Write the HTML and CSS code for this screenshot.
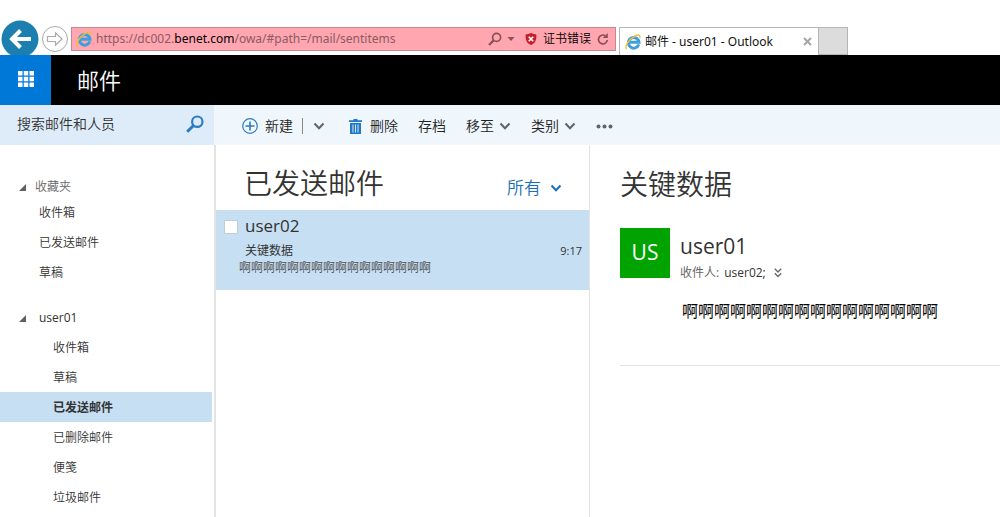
FILE: index.html
```html
<!DOCTYPE html>
<html lang="zh-CN">
<head>
<meta charset="utf-8">
<meta name="viewport" content="width=device-width, initial-scale=1">
<title>邮件 - user01 - Outlook</title>
<link rel="stylesheet" href="styles.css">
</head>
<body>
<svg class="defs" aria-hidden="true">
  <symbol id="ie" viewBox="0 0 16 16">
    <path d="M13.800 10.400A5.300 5.300 0 1 1 14 8.200H5" fill="none" stroke="#3f9fdc" stroke-width="3"/>
    <path d="M1.800 15C-.8 13 3.400 5.800 9.400 2.300 12.600.5 15.800.4 14.800 4" fill="none" stroke="#efc030" stroke-width="1.400"/>
  </symbol>
  <symbol id="chevron" viewBox="0 0 12 8">
    <path d="M1.500 1.500 6 6.200l4.500-4.700" fill="none" stroke="currentColor" stroke-width="2"/>
  </symbol>
</svg>

<div class="browser">
  <button class="back" type="button" aria-label="后退">
    <svg viewBox="0 0 38 38"><circle cx="19" cy="19" r="18.500" fill="#1d7fb0"/><path d="M30 19H11M19.500 10.500 11 19l8.500 8.500" fill="none" stroke="#fff" stroke-width="4"/></svg>
  </button>
  <button class="forward" type="button" aria-label="前进">
    <svg viewBox="0 0 28 28"><circle cx="14" cy="14" r="12.500" fill="#fff" stroke="#a9a9a9"/><path d="M6.500 11.500h8V7.800l6.500 6.200-6.500 6.200v-3.700h-8z" fill="#fff" stroke="#a9a9a9" stroke-width="1.200"/></svg>
  </button>
  <div class="address">
    <svg class="ie"><use href="#ie"/></svg>
    <span class="url">https://dc002.<b>benet.com</b>/owa/#path=/mail/sentitems</span>
    <button class="tool" type="button" aria-label="搜索">
      <svg width="14" height="14" viewBox="0 0 14 14"><circle cx="8.600" cy="5.400" r="4" fill="none" stroke="#8a5058" stroke-width="1.700"/><path d="M5.600 8.400 1 13" stroke="#8a5058" stroke-width="2.200"/></svg>
      <svg width="8" height="4" viewBox="0 0 8 4"><path d="M.5 0h7L4 4z" fill="#8a5058"/></svg>
    </button>
    <button class="cert" type="button">
      <svg width="12" height="12" viewBox="0 0 12 12"><path d="M6 0c2 1 3.500 1.300 5.200 1.300C12 6 10.500 10.500 6 12 1.500 10.500 0 6 .8 1.300 2.500 1.300 4 1 6 0z" fill="#c4202c"/><path d="M3.800 3.800l4.400 4.400M8.200 3.800 3.800 8.200" stroke="#fff" stroke-width="1.600"/></svg>
      证书错误
    </button>
    <button class="tool" type="button" aria-label="刷新">
      <svg width="12" height="12" viewBox="0 0 12 12"><path d="M10.300 7A4.400 4.400 0 1 1 8.300 2.700" fill="none" stroke="#8a5058" stroke-width="1.700"/><path d="M10.800 0v5H5.800z" fill="#8a5058"/></svg>
    </button>
  </div>
  <div class="tab">
    <svg class="ie"><use href="#ie"/></svg>
    <span class="tab-title">邮件 - user01 - Outlook</span>
    <button type="button" aria-label="关闭标签页"><svg width="9" height="9" viewBox="0 0 9 9"><path d="M1 1l7 7M8 1 1 8" stroke="#a6a6a6" stroke-width="2"/></svg></button>
  </div>
  <button class="new-tab" type="button" aria-label="新建标签页"></button>
</div>

<header class="header">
  <button class="launcher" type="button" aria-label="应用启动器">
    <svg width="16" height="16" viewBox="0 0 16 16" fill="#fff"><path d="M0 0h4.500v4.500H0zM5.750 0h4.500v4.500h-4.500zM11.500 0H16v4.500h-4.500zM0 5.750h4.500v4.500H0zM5.750 5.750h4.500v4.500h-4.500zM11.500 5.750H16v4.500h-4.500zM0 11.500h4.500V16H0zM5.750 11.500h4.500V16h-4.500zM11.500 11.500H16V16h-4.500z"/></svg>
  </button>
  <h1 class="app-name">邮件</h1>
</header>

<div class="commands">
  <form class="search">
    <input type="search" placeholder="搜索邮件和人员" aria-label="搜索邮件和人员">
    <button type="submit" aria-label="搜索"><svg width="18" height="18" viewBox="0 0 18 18"><circle cx="11.300" cy="6.700" r="5.200" fill="none" stroke="#2b7cc4" stroke-width="2.200"/><path d="M7.500 10.500 1.200 16.800" stroke="#2b7cc4" stroke-width="3"/></svg></button>
  </form>
  <div class="toolbar">
    <button class="new" type="button"><svg width="16" height="16" viewBox="0 0 16 16"><circle cx="8" cy="8" r="7.300" fill="none" stroke="#2b7cc4" stroke-width="1.200"/><path d="M8 3.500v9M3.500 8h9" stroke="#2b7cc4" stroke-width="1.600"/></svg>新建</button>
    <span class="divider"></span>
    <button class="more-new" type="button" aria-label="更多新建选项"><svg class="chev"><use href="#chevron"/></svg></button>
    <button class="delete" type="button"><svg width="13" height="15" viewBox="0 0 13 15"><path d="M4.500 0h4v1.200H13v1.800H0V1.200h4.500zM1 4h11v11H1z" fill="#1f78c8"/><path d="M4 5.500v8M6.500 5.500v8M9 5.500v8" stroke="#d7e8f7"/></svg>删除</button>
    <button class="archive" type="button">存档</button>
    <button class="move" type="button">移至<svg class="chev"><use href="#chevron"/></svg></button>
    <button class="category" type="button">类别<svg class="chev"><use href="#chevron"/></svg></button>
    <button type="button" aria-label="更多"><svg width="17" height="5" viewBox="0 0 17 5" fill="#5f6468"><circle cx="2.500" cy="2.500" r="2"/><circle cx="8.500" cy="2.500" r="2"/><circle cx="14.500" cy="2.500" r="2"/></svg></button>
  </div>
</div>

<main class="main">
  <nav class="folders" aria-label="文件夹">
    <section class="favorites">
      <button class="group" type="button" aria-expanded="true"><svg viewBox="0 0 7 7"><path d="M7 0v7H0z" fill="#606060"/></svg>收藏夹</button>
      <a href="#inbox">收件箱</a>
      <a href="#sent">已发送邮件</a>
      <a href="#drafts">草稿</a>
    </section>
    <section class="account">
      <button class="group" type="button" aria-expanded="true"><svg viewBox="0 0 7 7"><path d="M7 0v7H0z" fill="#606060"/></svg>user01</button>
      <a href="#inbox">收件箱</a>
      <a href="#drafts">草稿</a>
      <a class="selected" href="#sent" aria-current="page">已发送邮件</a>
      <a href="#deleted">已删除邮件</a>
      <a href="#notes">便笺</a>
      <a href="#junk">垃圾邮件</a>
    </section>
  </nav>

  <section class="list">
    <div class="list-head">
      <h2>已发送邮件</h2>
      <button type="button">所有<svg class="chev"><use href="#chevron"/></svg></button>
    </div>
    <article class="message">
      <input type="checkbox" aria-label="选择 user02 的邮件">
      <div class="message-body">
        <div class="person">user02</div>
        <div class="subject"><span>关键数据</span><time>9:17</time></div>
        <div class="preview">啊啊啊啊啊啊啊啊啊啊啊啊啊啊啊啊</div>
      </div>
    </article>
  </section>

  <article class="reading">
    <h2>关键数据</h2>
    <div class="sender">
      <div class="avatar">US</div>
      <div>
        <div class="sender-name">user01</div>
        <div class="recipients"><span>收件人:</span> user02;
          <button type="button" aria-label="显示详细信息"><svg width="8" height="10" viewBox="0 0 8 10"><path d="M.8.800 4 4 7.200.8M.8 5.300 4 8.500l3.200-3.200" fill="none" stroke="#666" stroke-width="1.400"/></svg></button>
        </div>
      </div>
    </div>
    <p class="content">啊啊啊啊啊啊啊啊啊啊啊啊啊啊啊啊</p>
    <hr>
  </article>
</main>
</body>
</html>
```
FILE: styles.css
```css
* { box-sizing: border-box; }
body {
  margin: 0;
  min-height: 100vh;
  display: flex;
  flex-direction: column;
  background: #fff;
  color: #333;
  font: 12px/20px "Open Sans", "Noto Sans CJK SC", sans-serif;
}
button {
  display: inline-flex;
  align-items: center;
  padding: 0;
  border: 0;
  background: none;
  color: inherit;
  font: inherit;
  white-space: nowrap;
}
svg { display: block; flex: none; }
a { color: inherit; text-decoration: none; }
h1, h2, p { margin: 0; font-weight: 350; }
.defs { position: absolute; width: 0; height: 0; }
.chev { width: 12px; height: 8px; }
.ie { width: 16px; height: 16px; }

.browser {
  display: flex;
  align-items: flex-start;
  height: 55px;
  padding: 20px 0 0 1px;
  overflow: hidden;
  background: #fff;
  font-family: "Noto Sans", "Noto Sans CJK SC", sans-serif;
}
.back svg { width: 38px; height: 38px; }
.forward { margin: 5px 2px 0; }
.forward svg { width: 28px; height: 28px; }
.address {
  display: flex;
  align-items: center;
  flex: 0 1 545px;
  min-width: 0;
  height: 24px;
  margin-top: 7px;
  padding: 0 6px 0 4px;
  border: 1px solid #c08a92;
  background: #ffa6b0;
}
.url {
  flex: 1;
  min-width: 0;
  margin-left: 4px;
  overflow: hidden;
  color: #8c5a62;
  font-size: 12px;
  white-space: nowrap;
}
.url b { color: #000; font-weight: 400; }
.tool { gap: 5px; }
.cert { gap: 6px; margin: 0 6px 0 10px; color: #000; font-weight: 350; }
.tab {
  display: flex;
  align-items: center;
  flex: 0 1 200px;
  height: 28px;
  margin: 7px 0 0 3px;
  padding: 0 6px 0 5px;
  border: 1px solid #b5b5b5;
  border-bottom: 0;
}
.tab-title { flex: 1; margin-left: 4px; color: #111; white-space: nowrap; }
.new-tab {
  width: 29px;
  height: 28px;
  margin-top: 7px;
  border: 1px solid #b5b5b5;
  border-left: 0;
  background: #dcdcdc;
}

.header { display: flex; align-items: center; height: 50px; background: #000; color: #fff; }
.launcher { width: 51px; height: 50px; padding-bottom: 2px; justify-content: center; background: #0078d7; }
.app-name { margin-left: 26px; font-size: 22px; line-height: 32px; }

.commands {
  display: grid;
  grid-template-columns: 214px 1fr;
  height: 40px;
  color: #222;
  font-size: 14px;
  font-weight: 350;
}
.search { display: flex; align-items: center; padding: 0 10px 2px 17px; background: #deecf9; }
.search input {
  flex: 1;
  min-width: 0;
  padding: 0;
  border: 0;
  outline: 0;
  background: none;
  font: inherit;
}
.search input::placeholder { color: #333; opacity: 1; }
.toolbar { display: flex; align-items: center; padding: 2px 0 0 28px; background: #eff6fc; }
.toolbar .chev { color: #5f6468; }
.new { gap: 7px; }
.divider { width: 1px; height: 16px; margin: 0 10px 0 9px; background: #888; }
.more-new { margin-right: 24px; }
.delete { gap: 8px; margin-right: 20px; }
.archive { margin-right: 20px; }
.move, .category { gap: 5px; margin-right: 20px; }

.main { display: grid; grid-template-columns: 214px 376px 1fr; flex: 1; }
.folders { padding-top: 30px; padding-right: 2px; }
.folders a { display: block; height: 30px; padding: 6px 0 0 39px; font-weight: 350; }
.group { padding: 2px 0 0 19px; }
.group svg { width: 7px; height: 7px; }
.favorites { margin-bottom: 15px; }
.favorites .group { gap: 9px; height: 22px; color: #666; font-weight: 350; }
.account .group { gap: 13px; height: 30px; }
.account a { padding-left: 53px; }
.folders .selected { background: #c7dff3; font-weight: 700; }

.list { border-left: 2px solid #e3e3e3; border-right: 1px solid #e3e3e3; }
.list-head { display: flex; align-items: center; height: 65px; padding: 11px 27px 0 28px; }
.list-head h2 { flex: 1; }
.list-head button { gap: 9px; margin-top: 10px; color: #1a70b8; font-size: 17px; line-height: 24px; font-weight: 350; }
h2 { font-size: 28px; line-height: 40px; }
.message { display: flex; min-height: 80px; padding: 3px 7px 0 8px; background: #c7dff3; }
.message input {
  appearance: none;
  width: 14px;
  height: 14px;
  margin: 7px 0 0;
  border: 1px solid #c4ccd4;
  background: #fff;
}
.message-body { flex: 1; margin-left: 7px; }
.person { font-size: 17px; line-height: 26px; }
.subject { display: flex; justify-content: space-between; padding-top: 2px; }
.subject time { font-size: 11px; }
.preview { margin-left: -6px; color: #555; line-height: 14px; }

.reading { padding: 19px 0 0 30px; }
.sender { display: flex; gap: 10px; margin-top: 24px; }
.avatar {
  width: 50px;
  height: 50px;
  background: #00a300;
  color: #fff;
  font-size: 21px;
  line-height: 48px;
  text-align: center;
}
.sender-name { margin-top: 3px; font-size: 21px; line-height: 30px; }
.recipients { display: flex; align-items: center; gap: 5px; padding-top: 2px; }
.recipients span { color: #666; }
.recipients button { margin-left: 3px; }
.content { margin: 16px 0 0 62px; color: #000; font-size: 16px; line-height: 24px; font-weight: 400; }
hr { height: 1px; margin: 42px 0 0; border: 0; background: #e3e3e3; }
```
